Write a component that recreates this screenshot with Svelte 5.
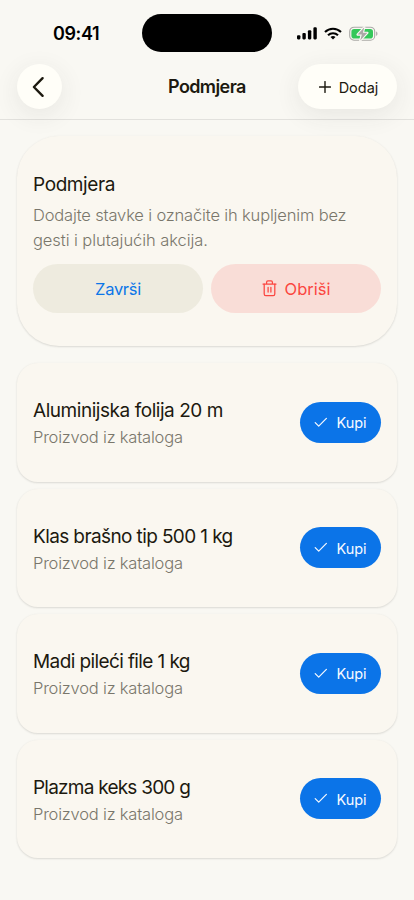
<script>
	let title = 'Podmjera';

	let items = [
		{ name: 'Aluminijska folija 20 m', note: 'Proizvod iz kataloga', spacing: -0.45 },
		{ name: 'Klas brašno tip 500 1 kg', note: 'Proizvod iz kataloga', spacing: -0.61 },
		{ name: 'Madi pileći file 1 kg', note: 'Proizvod iz kataloga', spacing: -0.6 },
		{ name: 'Plazma keks 300 g', note: 'Proizvod iz kataloga', spacing: -0.77 }
	];
</script>

<div class="screen">
	<div class="status">
		<div class="time">09:41</div>
		<div class="island"></div>
		<div class="indicators">
			<svg class="signal" width="21" height="14" viewBox="0 0 21 14">
				<rect x="0" y="9.2" width="3.4" height="4.2" rx="1.1" />
				<rect x="5.4" y="7" width="3.4" height="6.4" rx="1.1" />
				<rect x="10.9" y="4.2" width="3.4" height="9.2" rx="1.1" />
				<rect x="16.4" y="1.3" width="3.4" height="12.1" rx="1.1" />
			</svg>
			<svg class="wifi" width="18" height="14" viewBox="0 0 18 14">
				<g fill="none" stroke="#000" stroke-width="2.1">
					<path d="M1 5.1C5.5 .7 12.5 .7 17 5.1" />
					<path d="M4 8.2C6.8 5.5 11.2 5.5 14 8.2" />
				</g>
				<path d="M9 12.6l-2.5-2.5a3.6 3.6 0 0 1 5 0z" />
			</svg>
			<svg class="battery" width="29" height="16" viewBox="0 0 29 16">
				<rect x="0.7" y="1.2" width="25" height="13" rx="4.3" fill="none" stroke="#aaa9a6" stroke-width="1.1" />
				<rect x="2.4" y="2.9" width="21.6" height="9.6" rx="2.8" fill="#34c759" />
				<path d="M27.1 5.5c1.8.6 1.8 3.8 0 4.4z" fill="#aaa9a6" />
				<path d="M15.3 1.2L8.6 8.6h4.2l-1.6 5.8 7.2-7.6h-4.5z" fill="#aaa9a6" stroke="#f9f8f3" stroke-width="2.2" paint-order="stroke" stroke-linejoin="round" />
			</svg>
		</div>
	</div>

	<header>
		<button class="back" aria-label="Natrag">
			<svg width="14" height="22" viewBox="0 0 14 22">
				<path d="M11.6 2.2L2.9 11l8.7 8.8" fill="none" stroke="currentColor" stroke-width="2.4" stroke-linecap="round" stroke-linejoin="round" />
			</svg>
		</button>
		<h1>{title}</h1>
		<button class="add">
			<svg width="12" height="12" viewBox="0 0 12 12">
				<path d="M6 .6v10.8M.6 6h10.8" fill="none" stroke="currentColor" stroke-width="1.4" stroke-linecap="round" />
			</svg>
			<span>Dodaj</span>
		</button>
	</header>

	<main>
		<section class="intro">
			<h2>{title}</h2>
			<p>
				<span class="first">Dodajte stavke i označite ih kupljenim bez</span><br />
				<span class="second">gesti i plutajućih akcija.</span>
			</p>
			<div class="actions">
				<button class="finish"><span>Završi</span></button>
				<button class="remove">
					<svg width="15" height="17" viewBox="0 0 15 17">
						<g fill="none" stroke="currentColor" stroke-width="1.25" stroke-linecap="round" stroke-linejoin="round">
							<path d="M1 4h13M4.6 3.8V2.2c0-.8.5-1.3 1.3-1.3h3.2c.8 0 1.3.5 1.3 1.3v1.6" />
							<path d="M2.2 4.2V14c0 1 .6 1.6 1.6 1.6h7.4c1 0 1.6-.6 1.6-1.6V4.2" />
							<path d="M6.1 7.3v4.8M8.9 7.3v4.8" />
						</g>
					</svg>
					<span>Obriši</span>
				</button>
			</div>
		</section>

		{#each items as item}
			<article class="item">
				<div class="text">
					<h3 style="letter-spacing: {item.spacing}px">{item.name}</h3>
					<p>{item.note}</p>
				</div>
				<button class="buy">
					<svg width="14" height="11" viewBox="0 0 14 11">
						<path d="M1.2 5.6l3.5 3.6L12.4 1.4" fill="none" stroke="currentColor" stroke-width="1.2" stroke-linecap="round" stroke-linejoin="round" />
					</svg>
					<span>Kupi</span>
				</button>
			</article>
		{/each}
	</main>
</div>

<style>
	:global(body) {
		background: #f9f8f3;
	}

	.screen {
		width: 414px;
		height: 900px;
		overflow: hidden;
		background: #f9f8f3;
		color: #1c190f;
		font-family: Inter, 'Liberation Sans', sans-serif;
		box-sizing: border-box;
	}

	h1,
	h2,
	h3,
	p {
		margin: 0;
		white-space: nowrap;
	}

	button {
		border: 0;
		padding: 0;
		font-family: inherit;
		color: inherit;
		display: flex;
		align-items: center;
		justify-content: center;
	}

	svg {
		display: block;
		flex: none;
	}

	.status {
		height: 64px;
		display: grid;
		grid-template-columns: 142px 130px 142px;
	}

	.time {
		padding: 23px 0 0 53px;
		font-size: 18px;
		line-height: 22px;
		font-weight: 600;
		letter-spacing: -0.4px;
		color: #000;
	}

	.island {
		height: 38px;
		margin-top: 14px;
		border-radius: 19px;
		background: #000;
	}

	.indicators {
		display: flex;
		align-items: flex-start;
		padding: 26px 0 0 25px;
	}

	.wifi {
		margin: 1px 0 0 6px;
	}

	.battery {
		margin-left: 7px;
	}

	header {
		height: 55px;
		display: grid;
		grid-template-columns: 45px 1fr 99px;
		justify-content: space-between;
		align-items: start;
		padding: 0 17px;
		border-bottom: 1px solid #e2e1dd;
	}

	.back,
	.add {
		height: 45px;
		background: #fffef8;
		border-radius: 23px;
		box-shadow: 0 6px 26px rgba(60, 60, 50, 0.09);
	}

	.back svg {
		margin-right: 4px;
	}

	h1 {
		font-size: 18px;
		line-height: 46px;
		font-weight: 600;
		letter-spacing: -0.6px;
		padding-left: 106px;
	}

	.add {
		font-size: 14.5px;
		gap: 8px;
		padding-left: 2px;
	}

	.add span {
		padding-top: 1px;
	}

	main {
		padding: 16px 17px 0;
	}

	.intro {
		height: 210px;
		box-sizing: border-box;
		padding: 36px 16px 0;
		border-radius: 42px;
		margin-bottom: 17px;
	}

	.intro,
	.item {
		background: #faf7f0;
		box-shadow: 0 1px 2px rgba(40, 40, 30, 0.13), 0 0 3px rgba(40, 40, 30, 0.03);
	}

	h2,
	h3 {
		font-size: 19px;
		line-height: 26px;
		font-weight: 400;
	}

	h2 {
		letter-spacing: -0.4px;
	}

	p {
		font-size: 16.5px;
		font-weight: 300;
		line-height: 25px;
		color: #79766b;
	}

	.intro p {
		margin-top: 5px;
	}

	.first {
		letter-spacing: -0.16px;
	}

	.second {
		letter-spacing: -0.07px;
	}

	.actions {
		display: grid;
		grid-template-columns: 1fr 1fr;
		gap: 8px;
		margin-top: 11px;
	}

	.actions button {
		height: 49px;
		border-radius: 25px;
		font-size: 16.5px;
		gap: 8px;
	}

	.finish {
		background: #eeebdf;
		color: #0c76e8;
		letter-spacing: -0.3px;
	}

	.remove {
		background: #f9ddd7;
		color: #fb4640;
	}

	.item {
		height: 118.5px;
		box-sizing: border-box;
		padding: 0 16px;
		margin-bottom: 7px;
		border-radius: 21px;
		display: flex;
		align-items: center;
		justify-content: space-between;
	}

	.text {
		padding-top: 4px;
	}

	.item p {
		letter-spacing: -0.2px;
		margin-top: 1px;
	}

	.buy {
		width: 81px;
		height: 41px;
		border-radius: 20.5px;
		background: #0b74e8;
		color: #f7faff;
		font-size: 14.5px;
		gap: 8px;
	}

	.buy span {
		padding-top: 1px;
	}
</style>
